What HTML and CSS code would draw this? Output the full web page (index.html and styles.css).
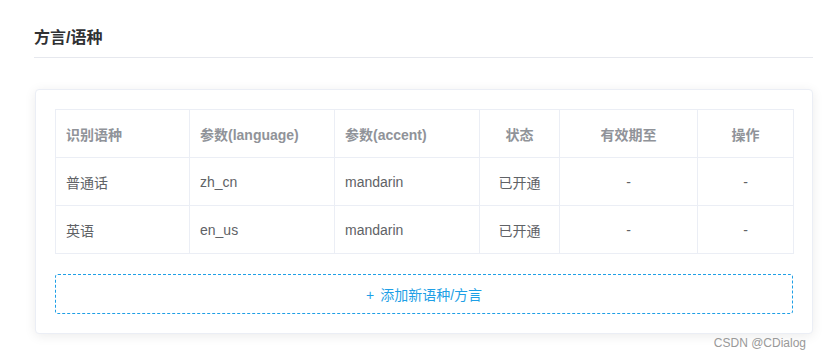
FILE: index.html
```
<!DOCTYPE html>
<html lang="zh-CN">
<head>
<meta charset="utf-8">
<title>方言/语种</title>
<link rel="stylesheet" href="styles.css">
</head>
<body>
<div class="page">
  <div class="section-head">方言/语种</div>
  <div class="card">
    <table class="lang-table">
      <colgroup>
        <col class="c1"><col class="c2"><col class="c3"><col class="c4"><col class="c5"><col class="c6">
      </colgroup>
      <thead>
        <tr>
          <th class="left">识别语种</th>
          <th class="left">参数(language)</th>
          <th class="left">参数(accent)</th>
          <th>状态</th>
          <th>有效期至</th>
          <th>操作</th>
        </tr>
      </thead>
      <tbody>
        <tr>
          <td class="left">普通话</td>
          <td class="left">zh_cn</td>
          <td class="left">mandarin</td>
          <td>已开通</td>
          <td>-</td>
          <td>-</td>
        </tr>
        <tr>
          <td class="left">英语</td>
          <td class="left">en_us</td>
          <td class="left">mandarin</td>
          <td>已开通</td>
          <td>-</td>
          <td>-</td>
        </tr>
      </tbody>
    </table>
    <button class="add-btn" type="button"><span class="plus">+</span>添加新语种/方言</button>
  </div>
</div>
<div class="watermark">CSDN @CDialog</div>
</body>
</html>
```
FILE: styles.css
```
html, body {
  margin: 0;
  padding: 0;
  background: #fff;
}

body {
  font-family: "Liberation Sans", "Noto Sans CJK SC", sans-serif;
  color: #606266;
  position: relative;
  width: 822px;
  height: 359px;
  overflow: hidden;
}

.page {
  padding: 26px 9px 0 34px;
}

.section-head {
  font-size: 16px;
  font-weight: bold;
  color: #303133;
  line-height: 24px;
  padding-bottom: 7px;
  border-bottom: 1px solid #e6e8ee;
}

.card {
  margin: 31px 0 0 1px;
  border: 1px solid #ebeef5;
  border-radius: 4px;
  box-shadow: 0 2px 12px rgba(0, 0, 0, 0.08);
  padding: 19px;
  background: #fff;
}

.lang-table {
  width: 738px;
  border-collapse: collapse;
  table-layout: fixed;
  font-size: 14px;
}

.c1 { width: 134px; }
.c2 { width: 145px; }
.c3 { width: 145px; }
.c4 { width: 80px; }
.c5 { width: 138px; }
.c6 { width: 96px; }

.lang-table th,
.lang-table td {
  border: 1px solid #ebeef5;
  height: 48px;
  padding: 0 10px;
  text-align: center;
  box-sizing: border-box;
}

.lang-table th {
  color: #909399;
  font-weight: bold;
}

.lang-table td {
  color: #606266;
}

.lang-table .left {
  text-align: left;
}

.add-btn {
  display: block;
  width: 100%;
  height: 40px;
  margin-top: 20px;
  border: 1px dashed #1e9fe6;
  border-radius: 3px;
  background: #fff;
  color: #1e9fe6;
  font-family: inherit;
  font-size: 14px;
  cursor: pointer;
}

.plus {
  margin-right: 6px;
}

.watermark {
  position: absolute;
  right: 16px;
  top: 335px;
  font-size: 12px;
  color: #999;
  line-height: 16px;
}
```
